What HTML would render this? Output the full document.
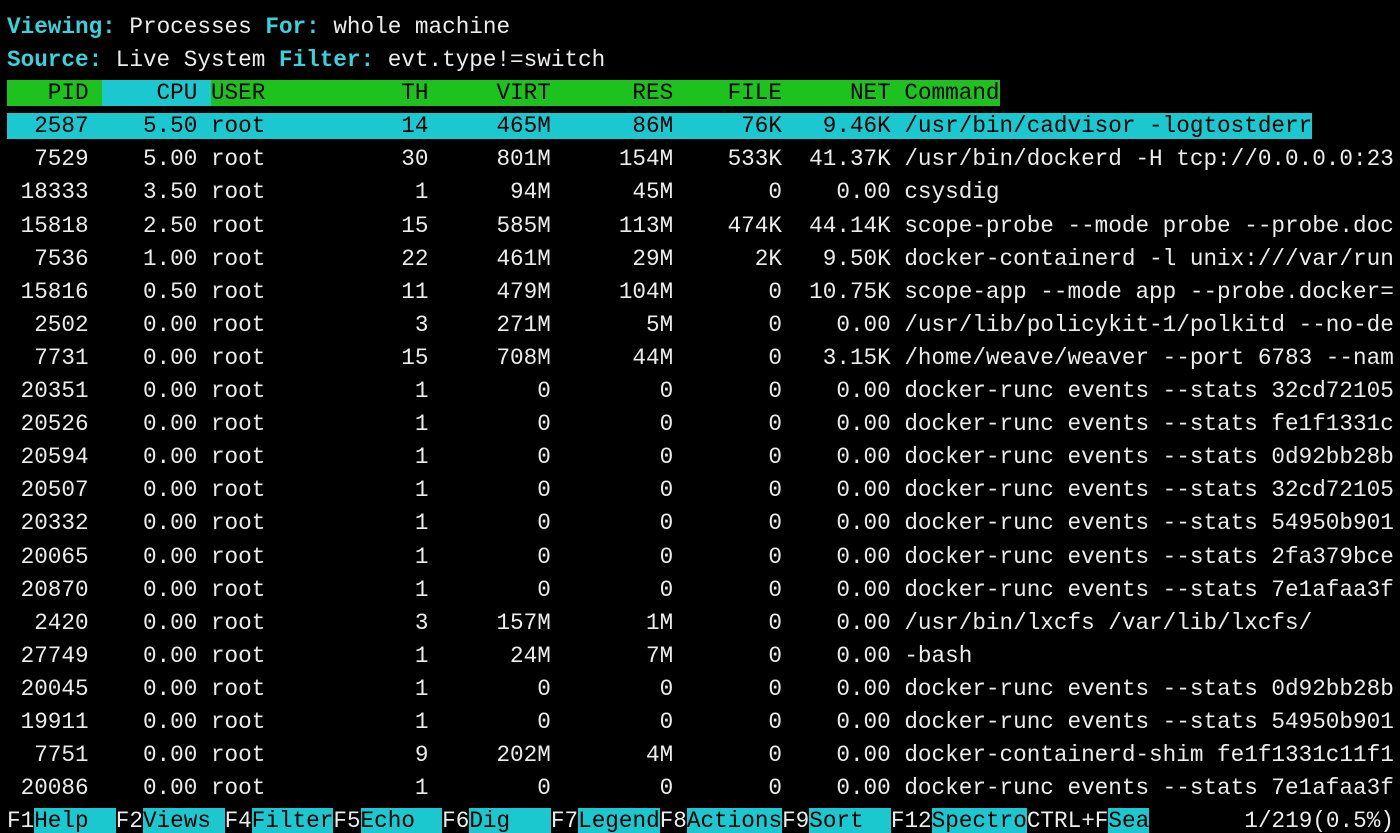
<!DOCTYPE html>
<html><head><meta charset="utf-8"><style>
html,body{margin:0;padding:0;background:#000;width:1400px;height:833px;overflow:hidden}
pre{margin:0;padding:11px 0 0 7px;font-family:"Liberation Mono",monospace;font-size:22.67px;line-height:33.1px;color:#ececec;white-space:pre}
.c{background:#1cc8cf;color:#000}
.g{background:#1ec21e;color:#000}
.b{color:#37d3dc;font-weight:bold}
</style></head><body>
<pre id="t"><span class="b">Viewing:</span> Processes <span class="b">For:</span> whole machine
<span class="b">Source:</span> Live System <span class="b">Filter:</span> evt.type!=switch
<span class="g">   PID </span><span class="c">    CPU </span><span class="g">USER          TH     VIRT      RES    FILE     NET Command</span>
<span class="c">  2587    5.50 root          14     465M      86M     76K   9.46K /usr/bin/cadvisor -logtostderr</span>
  7529    5.00 root          30     801M     154M    533K  41.37K /usr/bin/dockerd -H tcp://0.0.0.0:23
 18333    3.50 root           1      94M      45M       0    0.00 csysdig
 15818    2.50 root          15     585M     113M    474K  44.14K scope-probe --mode probe --probe.doc
  7536    1.00 root          22     461M      29M      2K   9.50K docker-containerd -l unix:///var/run
 15816    0.50 root          11     479M     104M       0  10.75K scope-app --mode app --probe.docker=
  2502    0.00 root           3     271M       5M       0    0.00 /usr/lib/policykit-1/polkitd --no-de
  7731    0.00 root          15     708M      44M       0   3.15K /home/weave/weaver --port 6783 --nam
 20351    0.00 root           1        0        0       0    0.00 docker-runc events --stats 32cd72105
 20526    0.00 root           1        0        0       0    0.00 docker-runc events --stats fe1f1331c
 20594    0.00 root           1        0        0       0    0.00 docker-runc events --stats 0d92bb28b
 20507    0.00 root           1        0        0       0    0.00 docker-runc events --stats 32cd72105
 20332    0.00 root           1        0        0       0    0.00 docker-runc events --stats 54950b901
 20065    0.00 root           1        0        0       0    0.00 docker-runc events --stats 2fa379bce
 20870    0.00 root           1        0        0       0    0.00 docker-runc events --stats 7e1afaa3f
  2420    0.00 root           3     157M       1M       0    0.00 /usr/bin/lxcfs /var/lib/lxcfs/
 27749    0.00 root           1      24M       7M       0    0.00 -bash
 20045    0.00 root           1        0        0       0    0.00 docker-runc events --stats 0d92bb28b
 19911    0.00 root           1        0        0       0    0.00 docker-runc events --stats 54950b901
  7751    0.00 root           9     202M       4M       0    0.00 docker-containerd-shim fe1f1331c11f1
 20086    0.00 root           1        0        0       0    0.00 docker-runc events --stats 7e1afaa3f
F1<span class="c">Help  </span>F2<span class="c">Views </span>F4<span class="c">Filter</span>F5<span class="c">Echo  </span>F6<span class="c">Dig   </span>F7<span class="c">Legend</span>F8<span class="c">Actions</span>F9<span class="c">Sort  </span>F12<span class="c">Spectro</span>CTRL+F<span class="c">Sea</span>       1/219(0.5%)</pre>
</body></html>
